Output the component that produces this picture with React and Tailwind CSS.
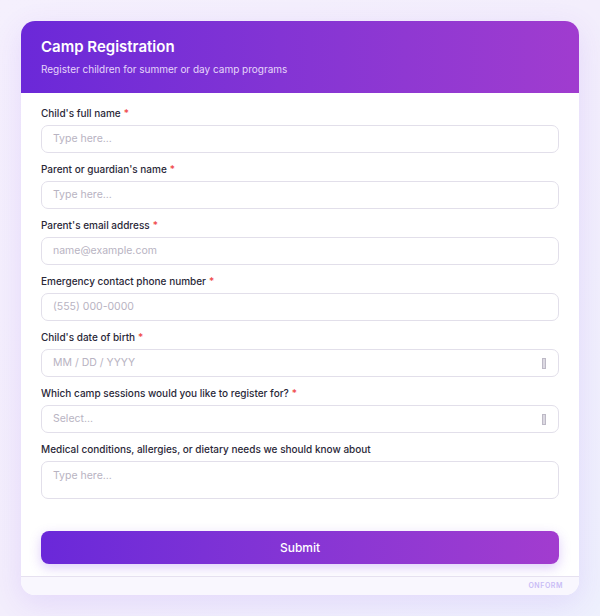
import React from "react";

const fields = [
  { label: "Child's full name", placeholder: "Type here...", required: true },
  { label: "Parent or guardian's name", placeholder: "Type here...", required: true },
  { label: "Parent's email address", placeholder: "name@example.com", required: true },
  { label: "Emergency contact phone number", placeholder: "(555) 000-0000", required: true },
  { label: "Child's date of birth", placeholder: "MM / DD / YYYY", required: true, icon: true },
  { label: "Which camp sessions would you like to register for?", placeholder: "Select...", required: true, icon: true },
];

function Field({ label, placeholder, required, icon }) {
  return (
    <div className="flex flex-col">
      <label className="text-[10px] leading-[13px] font-medium text-[#2a2838]">
        {label}
        {required && <span className="text-[#ef4444] ml-[3px]">*</span>}
      </label>
      <div className="mt-[5px] h-[28px] rounded-[7px] border border-[#e2dfea] bg-white flex items-center justify-between px-[11px]">
        <span className="text-[10.5px] text-[#b8b3c2]">{placeholder}</span>
        {icon && (
          <span className="w-[4px] h-[11px] border border-[#bdb9c6] bg-[#dcd9e2] mr-[1px]" />
        )}
      </div>
    </div>
  );
}

export default function App() {
  return (
    <div
      className="w-[600px] h-[616px] bg-gradient-to-br from-[#f5f0fd] via-[#f3eefc] to-[#eef0fd] pt-[21px] px-[21px]"
      style={{ fontFamily: "Inter, 'Noto Sans', sans-serif" }}
    >
      <div className="w-[558px] h-[574px] rounded-[14px] bg-white overflow-hidden flex flex-col shadow-[0_8px_30px_rgba(124,58,237,0.12)]">
        <div className="h-[72px] bg-gradient-to-r from-[#6b28d8] to-[#a03ccf] px-[20px] pt-[16px]">
          <h1 className="text-[15px] leading-[20px] font-semibold text-white">Camp Registration</h1>
          <p className="mt-[5px] text-[10px] leading-[14px] text-[#e6d6fa]">
            Register children for summer or day camp programs
          </p>
        </div>
        <div className="flex-1 px-[20px] pt-[14px] flex flex-col gap-[10px]">
          {fields.map((f) => (
            <Field key={f.label} {...f} />
          ))}
          <div className="flex flex-col">
            <label className="text-[10px] leading-[13px] font-medium text-[#2a2838]">
              Medical conditions, allergies, or dietary needs we should know about
            </label>
            <div className="mt-[5px] h-[38px] rounded-[7px] border border-[#e2dfea] bg-white px-[11px] pt-[4px] leading-[14px]">
              <span className="text-[10.5px] text-[#b8b3c2]">Type here...</span>
            </div>
          </div>
          <button className="mt-[22px] h-[33px] rounded-[8px] bg-gradient-to-r from-[#6a28d9] to-[#a23ccf] text-white text-[12px] font-medium shadow-[0_4px_12px_rgba(124,58,237,0.25)]">
            Submit
          </button>
        </div>
        <div className="h-[19px] border-t border-[#e6e1f0] bg-[#f9f7fe] flex items-center justify-end pr-[16px]">
          <span className="text-[7px] font-semibold tracking-[0.08em] text-[#c9bdf6]">ONFORM</span>
        </div>
      </div>
    </div>
  );
}
